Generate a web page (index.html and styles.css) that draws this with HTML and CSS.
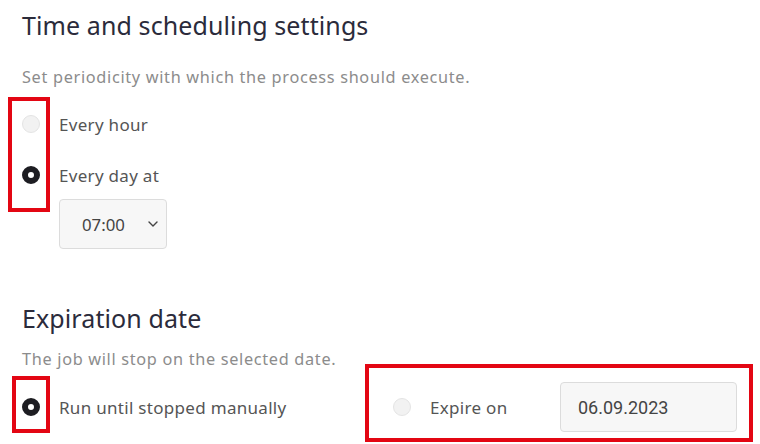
FILE: index.html
```html
<!DOCTYPE html>
<html>
<head>
<meta charset="utf-8">
<link rel="stylesheet" href="styles.css">
</head>
<body>
<div class="page">
  <section class="section">
    <h2 class="title">Time and scheduling settings</h2>
    <p class="desc">Set periodicity with which the process should execute.</p>
    <div class="options">
      <label class="option"><span class="radio"></span><span class="label">Every hour</span></label>
      <label class="option"><span class="radio checked"></span><span class="label">Every day at</span></label>
      <div class="select">
        <span class="select-value">07:00</span>
        <svg class="chevron" width="10" height="6" viewBox="0 0 10 6"><path d="M1 1l4 4 4-4" fill="none" stroke="#444" stroke-width="1.4" stroke-linecap="round" stroke-linejoin="round"/></svg>
      </div>
    </div>
  </section>
  <section class="section second">
    <h2 class="title">Expiration date</h2>
    <p class="desc">The job will stop on the selected date.</p>
    <div class="row">
      <label class="option first"><span class="radio checked"></span><span class="label">Run until stopped manually</span></label>
      <div class="expire">
        <label class="option"><span class="radio"></span><span class="label">Expire on</span></label>
        <div class="date">06.09.2023</div>
      </div>
    </div>
  </section>
  <div class="mark mark-a"></div>
  <div class="mark mark-b"></div>
  <div class="mark mark-c"></div>
</div>
</body>
</html>
```
FILE: styles.css
```css
* { box-sizing: border-box; }
html, body { margin: 0; padding: 0; background: #fff; }
body { font-family: "Noto Sans", "Open Sans", sans-serif; color: #555; }
.page { position: relative; width: 760px; height: 444px; overflow: hidden; padding: 8px 0 0 22px; }
.title { margin: 0; font-weight: 400; font-size: 25px; line-height: 34px; color: #2b2b3b; letter-spacing: 0.1px; }
.desc { margin: 24px 0 0; font-size: 16.3px; line-height: 22px; color: #8c8c8c; letter-spacing: 0.68px; }
.options { display: flex; flex-direction: column; align-items: flex-start; margin-top: 24px; }
.option { display: flex; align-items: center; gap: 19px; height: 24px; font-size: 17px; color: #555; letter-spacing: 0.3px; }
.options .option + .option { margin-top: 27px; }
.radio { width: 18px; height: 18px; border-radius: 50%; background: #f2f2f2; border: 1px solid #e4e4e4; flex: none; }
.radio.checked { background: #fff; border: 6px solid #1d1d22; }
.select { margin: 12px 0 0 37px; width: 108px; height: 50px; border: 1px solid #dcdcdc; border-radius: 4px; background: #f7f7f7; display: flex; align-items: center; padding: 0 8px 0 22px; justify-content: space-between; font-size: 16.8px; color: #444; }
.second { margin-top: 52px; }
.second .desc { margin-top: 13px; }
.row { display: flex; align-items: center; margin-top: 12px; }
.option.first { width: 371px; }
.expire { display: flex; align-items: center; }
.expire .option { width: 167px; }
.date { width: 177px; height: 50px; border: 1px solid #dcdcdc; border-radius: 4px; background: #f7f7f7; display: flex; align-items: center; padding-left: 17px; font-family: Roboto, sans-serif; font-size: 18px; color: #444; }
.mark { position: absolute; border: 4px solid #e30613; }
.mark-a { left: 8px; top: 97px; width: 42px; height: 115px; }
.mark-b { left: 12px; top: 376px; width: 38px; height: 57px; }
.mark-c { left: 365px; top: 364px; width: 388px; height: 78px; }
```
